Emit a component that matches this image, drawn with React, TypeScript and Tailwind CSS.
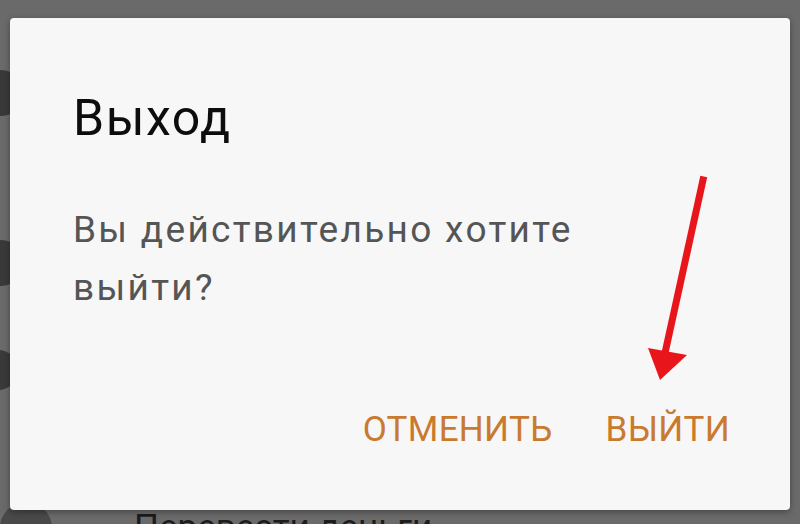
import React from 'react';

export default function App() {
  return (
    <div
      className="relative h-[524px] w-[800px] overflow-hidden bg-[#6b6a6a] pt-[18px] px-[10px]"
      style={{ fontFamily: 'Roboto, "Noto Sans", sans-serif' }}
    >
      {/* page behind the dialog */}
      <div className="absolute left-[-22px] top-[70px] h-[46px] w-[46px] rounded-full bg-[#3a3939]" />
      <div className="absolute left-[-22px] top-[240px] h-[46px] w-[46px] rounded-full bg-[#3a3939]" />
      <div className="absolute left-[-22px] top-[350px] h-[40px] w-[40px] rounded-full bg-[#3a3939]" />
      <div className="absolute bottom-[-30px] left-0 flex items-center gap-[82px]">
        <div className="h-[52px] w-[52px] rounded-full bg-[#4a4949]" />
        <span className="text-[35px] leading-[40px] text-[#1c1c1c]">Перевести деньги</span>
      </div>

      <div className="relative flex h-[492px] flex-col rounded-[4px] bg-[#f7f7f7] pl-[63px] pr-[60px] pt-[70px] shadow-[0_2px_6px_rgba(0,0,0,0.35)]">
        <h1 className="text-[50px] leading-[60px] tracking-[1.5px] text-[#0d0d0d]">Выход</h1>
        <p className="mt-[53px] w-[540px] text-[37px] leading-[58px] tracking-[2.3px] text-[#555555]">
          Вы действительно хотите выйти?
        </p>
        <div className="mt-[93px] flex justify-end gap-[53px] text-[35px] leading-[40px] text-[#c97a2e]">
          <button className="tracking-[0.3px]">ОТМЕНИТЬ</button>
          <button className="tracking-[0.3px]">ВЫЙТИ</button>
        </div>

        <svg className="absolute left-0 top-0" width="780" height="492" viewBox="0 0 780 492">
          <line x1="693" y1="162" x2="653" y2="344" stroke="#e8161b" strokeWidth="7" strokeLinecap="square" />
          <polygon points="650,362 638,330 677,337" fill="#e8161b" />
        </svg>
      </div>
    </div>
  );
}
